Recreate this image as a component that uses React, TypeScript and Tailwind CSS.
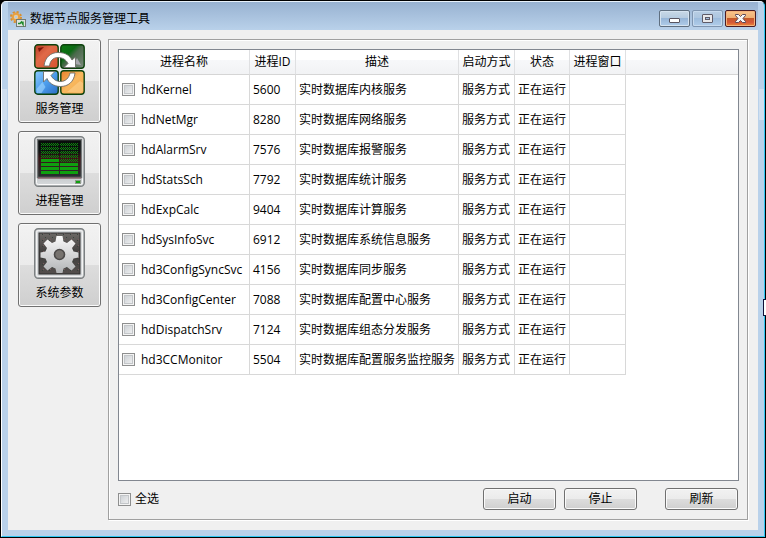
import React, { useState } from 'react';

const services = [
    { name: 'hdKernel', pid: 5600, desc: '实时数据库内核服务' },
    { name: 'hdNetMgr', pid: 8280, desc: '实时数据库网络服务' },
    { name: 'hdAlarmSrv', pid: 7576, desc: '实时数据库报警服务' },
    { name: 'hdStatsSch', pid: 7792, desc: '实时数据库统计服务' },
    { name: 'hdExpCalc', pid: 9404, desc: '实时数据库计算服务' },
    { name: 'hdSysInfoSvc', pid: 6912, desc: '实时数据库系统信息服务' },
    { name: 'hd3ConfigSyncSvc', pid: 4156, desc: '实时数据库同步服务' },
    { name: 'hd3ConfigCenter', pid: 7088, desc: '实时数据库配置中心服务' },
    { name: 'hdDispatchSrv', pid: 7124, desc: '实时数据库组态分发服务' },
    { name: 'hd3CCMonitor', pid: 5504, desc: '实时数据库配置服务监控服务' },
];

const headers = ['进程名称', '进程ID', '描述', '启动方式', '状态', '进程窗口'];

const checkboxClass =
    'appearance-none shrink-0 w-[13px] h-[13px] border border-[#8e8f8f] bg-linear-to-br from-[#c6cbd0] to-[#f6f6f6] shadow-[inset_0_0_0_1px_#f4f4f4,inset_0_0_0_2px_#c3c6c9] checked:from-[#3c6fa8] checked:to-[#6d9ed0]';

const buttonClass =
    'border border-[#707070] rounded-[3px] bg-[linear-gradient(#f2f2f2,#ebebeb_50%,#dddddd_50%,#cfcfcf)] shadow-[inset_0_0_0_1px_#fafafa]';

const AppIcon = () => (
    <svg className="w-4 h-4" viewBox="0 0 16 16" aria-hidden="true">
        <circle cx="6" cy="6" r="5" fill="none" stroke="#d98f2c" strokeWidth="2" strokeDasharray="2.1 1.83" />
        <circle cx="6" cy="6" r="3.3" fill="#f8d08a" stroke="#e5a044" strokeWidth="2.2" />
        <circle cx="6" cy="6" r="1.500" fill="#b7cbe2" />
        <rect x="6.500" y="8.500" width="9" height="7" fill="#dfe4e0" stroke="#727b76" />
        <path d="M8 12.500h2l1.500-1.500L13 13.500V10.500" fill="none" stroke="#1f8a2c" strokeWidth="1.400" />
    </svg>
);

const ServiceIcon = () => (
    <svg className="w-[51px] h-[51px]" viewBox="0 0 51 51" aria-hidden="true">
        <defs>
            <linearGradient id="red" x1="0" y1="0" x2="1" y2="1">
                <stop offset="0" stopColor="#b83a22" />
                <stop offset=".4" stopColor="#e06a48" />
                <stop offset="1" stopColor="#d8522f" />
            </linearGradient>
            <linearGradient id="green" x1="0" y1="0" x2="1" y2="1">
                <stop offset="0" stopColor="#0a7a10" />
                <stop offset=".35" stopColor="#0c6a14" />
                <stop offset=".5" stopColor="#4b6a4c" />
                <stop offset="1" stopColor="#7f8c80" />
            </linearGradient>
            <linearGradient id="blue" x1="0" y1="0" x2="1" y2="1">
                <stop offset="0" stopColor="#8ccbff" />
                <stop offset=".5" stopColor="#4d9eec" />
                <stop offset="1" stopColor="#2a6cc4" />
            </linearGradient>
            <linearGradient id="orange" x1="0" y1="0" x2="1" y2="1">
                <stop offset="0" stopColor="#e87f2c" />
                <stop offset=".5" stopColor="#f8b85e" />
                <stop offset="1" stopColor="#f4a648" />
            </linearGradient>
        </defs>
        <g stroke="#0d420d" strokeWidth="1.4">
            <rect x=".8" y=".8" width="23.4" height="23.4" rx="3" fill="url(#red)" />
            <rect x="26.8" y=".8" width="23.4" height="23.4" rx="3" fill="url(#green)" />
            <rect x=".8" y="26.8" width="23.4" height="23.4" rx="3" fill="url(#blue)" />
            <rect x="26.8" y="26.8" width="23.4" height="23.4" rx="3" fill="url(#orange)" />
        </g>
        <path d="M4 4l6-1-5 5z" fill="#7c1408" />
        <path d="M43 14l4 7-7-1z" fill="#b9b4c0" opacity=".8" />
        <path d="M2.5 45l6-7 3 5-4 6H3z" fill="#a4d8ff" opacity=".6" />
        <path d="M33 48l13-11 3 2v8l-2 2z" fill="#fbd08c" opacity=".6" />
        <g fill="#fff" stroke="#6d6d68" strokeWidth=".9" strokeLinejoin="round">
            <path d="M10 22C11 13 17 8.500 24 8.500c8 0 12 3.500 14 7.500l3.500-3v10.500H30l4-4C32 15.500 28.500 13.500 24 13.500c-5 0-8 3.500-8.500 8.500z" />
            <path d="M41 29c-1 9-7 13.500-14.500 13.500-7 0-12-4-13.500-8L9.500 38V27.500H21l-4 4c2 3.500 5 6 9.500 6 5 0 8.500-3.500 9.500-8.500z" />
        </g>
    </svg>
);

const ProcessIcon = () => (
    <svg className="w-[51px] h-[51px]" viewBox="0 0 51 51" aria-hidden="true">
        <defs>
            <linearGradient id="case" x1="0" y1="0" x2="0" y2="1">
                <stop offset="0" stopColor="#e4e6e8" />
                <stop offset=".8" stopColor="#c4c8cb" />
                <stop offset="1" stopColor="#d9dcde" />
            </linearGradient>
            <linearGradient id="screen" x1="0" y1="0" x2="0" y2="1">
                <stop offset="0" stopColor="#080c0a" />
                <stop offset=".3" stopColor="#0c1010" />
                <stop offset=".5" stopColor="#3a1416" />
                <stop offset="1" stopColor="#263030" />
            </linearGradient>
            <pattern id="dots" width="2" height="2" patternUnits="userSpaceOnUse">
                <path d="M0 0h1v1H0zM1 1h1v1H1z" fill="#0c860c" />
            </pattern>
        </defs>
        <rect x=".7" y=".7" width="49.600" height="49.600" rx="3.500" fill="url(#case)" stroke="#7c8082" strokeWidth="1.4" />
        <rect x="2.500" y="2.500" width="46" height="46" rx="2" fill="none" stroke="#fafafa" />
        <rect x="3.500" y="3.500" width="44" height="38" fill="url(#screen)" stroke="#737779" strokeWidth="1.500" />
        <path d="M4 42h43" stroke="#7d4a50" />
        <g fill="url(#dots)" shapeRendering="crispEdges">
            <path d="M7 7h18v3H7zM26 7h18v3H26zM7 11h18v3H7zM26 11h18v3H26zM7 15h18v3H7zM26 15h18v3H26zM7 19h18v3H7zM26 19h18v3H26zM26 23h18v3H26z" />
        </g>
        <path d="M7 23h18v3H7zM7 27h18v3H7zM26 27h18v3H26zM7 31h18v3H7zM26 31h18v3H26zM7 35h18v3H7zM26 35h18v3H26z" fill="#0fa00f" />
        <rect x="41" y="44" width="6" height="4" fill="#8e9a8a" />
        <rect x="42" y="45" width="4" height="2" fill="#0fa00f" />
    </svg>
);

const ParamIcon = () => (
    <svg className="w-[51px] h-[51px]" viewBox="0 0 51 51" aria-hidden="true">
        <defs>
            <linearGradient id="plate" x1="0" y1="0" x2="0" y2="1">
                <stop offset="0" stopColor="#6c6865" />
                <stop offset=".5" stopColor="#403e3d" />
                <stop offset="1" stopColor="#544f4d" />
            </linearGradient>
            <linearGradient id="gear" gradientUnits="userSpaceOnUse" x1="0" y1="8" x2="0" y2="44">
                <stop offset="0" stopColor="#fafafa" />
                <stop offset="1" stopColor="#b4b6b8" />
            </linearGradient>
            <pattern id="grain" width="7" height="6" patternUnits="userSpaceOnUse">
                <path d="M1 0h1v1H1zM4 3h1v1H4z" fill="#38423c" />
                <path d="M2 5h1v1H2z" fill="#765a5b" />
            </pattern>
        </defs>
        <rect x=".7" y=".7" width="49.600" height="49.600" rx="3.500" fill="#d4d7d9" stroke="#7c8082" strokeWidth="1.400" />
        <rect x="2.500" y="2.500" width="46" height="46" rx="2" fill="none" stroke="#f4f4f4" />
        <rect x="5" y="5" width="41" height="41" fill="url(#plate)" stroke="#2c2c2c" />
        <rect x="5.500" y="5.500" width="40" height="40" fill="url(#grain)" />
        <path
            d="M22.500 8h6l1 5.500 3.500 1.500 4.500-3.500 4 4-3.500 4.500 1.500 3.500 5 1v5l-5 1-1.500 3.500 3.500 4.500-4 4-4.500-3.500-3.500 1.500-1 4.500h-6l-1-4.500-3.500-1.500-4.500 3.500-4-4 3.500-4.500-1.500-3.500-5-1v-5l5-1 1.500-3.500-3.500-4.500 4-4 4.500 3.500 3.500-1.500z"
            fill="url(#gear)"
        />
        <circle cx="25.500" cy="26.500" r="5" fill="#77736f" stroke="#4c4a49" strokeWidth="1.600" />
    </svg>
);

const navItems = [
    { label: '服务管理', icon: ServiceIcon },
    { label: '进程管理', icon: ProcessIcon },
    { label: '系统参数', icon: ParamIcon },
];

const TitleBar = () => (
    <header className="flex items-start h-7 px-[2px] bg-linear-to-b from-[#98b2d1] to-[#b9d1ea]">
        <div className="flex flex-1 items-center gap-1 pt-[9px]">
            <AppIcon />
            <h1>数据节点服务管理工具</h1>
        </div>
        <div className="flex gap-[2px] pt-2">
            <button
                aria-label="最小化"
                className="flex items-end justify-center w-[31px] h-[17px] pb-[3px] rounded-[2px] border border-[#5f6f80] bg-[linear-gradient(#c9d9e6,#b6cbe0_45%,#94b3d5_45%,#b0cdea)] shadow-[inset_0_0_0_1px_#d5e3f0]"
            >
                <svg className="w-[11px] h-[5px]" viewBox="0 0 11 5" aria-hidden="true">
                    <rect x=".5" y=".5" width="10" height="4" rx=".5" fill="#fff" stroke="#595560" />
                </svg>
            </button>
            <button
                aria-label="最大化"
                className="flex items-center justify-center w-[31px] h-[17px] rounded-[2px] border border-[#7f95b0] bg-[linear-gradient(#b9cee3,#adc6e0_45%,#9bbadb_45%,#b0cdea)] shadow-[inset_0_0_0_1px_#c7daee]"
            >
                <svg className="w-[11px] h-[9px]" viewBox="0 0 11 9" aria-hidden="true">
                    <rect x=".5" y=".5" width="10" height="8" rx=".5" fill="#e8e8ea" stroke="#5f5b68" />
                    <rect x="3.500" y="3.500" width="4" height="2" fill="#a3bddc" stroke="#5f5b68" />
                </svg>
            </button>
            <button
                aria-label="关闭"
                className="flex items-center justify-center w-[31px] h-[17px] rounded-[2px] border border-[#4a1c24] bg-[linear-gradient(#f8c58c,#efb075_45%,#c25a25_45%,#d4573a_75%,#f08a35)] shadow-[inset_0_0_0_1px_#f3b27c]"
            >
                <svg className="w-[11px] h-[9px]" viewBox="0 0 11 9" aria-hidden="true">
                    <path
                        d="M.5.5h3l2 2 2-2h3v1L8 4.500l2.500 3v1h-3l-2-2-2 2h-3v-1l2.500-3L.5 1.500z"
                        fill="#f7f7f7"
                        stroke="#5d4a58"
                    />
                </svg>
            </button>
        </div>
    </header>
);

const App = () => {
    const [selected, setSelected] = useState<number[]>([]);
    const allSelected = selected.length === services.length;

    const toggle = (pid: number) =>
        setSelected(selected.includes(pid) ? selected.filter((p) => p !== pid) : [...selected, pid]);
    const toggleAll = () => setSelected(allSelected ? [] : services.map((s) => s.pid));

    return (
        <div className="relative min-h-screen flex bg-black p-px text-xs leading-4 text-black font-['Open_Sans','Noto_Sans_CJK_SC',sans-serif]">
            <div className="flex-1 flex flex-col rounded-t-[5px] border border-l-white border-t-[#e8f2fb] border-r-[#2fc6f2] border-b-[#2fc6f2] bg-[#b9d1ea] px-[6px] pb-[6px] overflow-hidden">
                <TitleBar />

                <div className="flex-1 flex gap-[7px] bg-[#f0f0f0] px-[10px] pt-[9px] pb-[10px]">
                    <nav className="flex flex-col gap-2">
                        {navItems.map((item) => {
                            const Icon = item.icon;
                            return (
                                <button
                                    key={item.label}
                                    className={`${buttonClass} flex flex-col items-center gap-[6px] w-[83px] h-[84px] pt-1`}
                                >
                                    <Icon />
                                    {item.label}
                                </button>
                            );
                        })}
                    </nav>

                    <main className="flex-1 flex flex-col gap-[7px] border border-[#a0a0a0] shadow-[inset_1px_1px_0_#fff,1px_1px_0_#fff] pl-[9px] pr-2 py-[9px]">
                        <div className="flex-1 bg-white border border-[#828790]">
                            <table className="w-full table-fixed border-separate border-spacing-0">
                                <colgroup>
                                    <col className="w-[131px]" />
                                    <col className="w-[46px]" />
                                    <col className="w-[163px]" />
                                    <col className="w-[56px]" />
                                    <col className="w-[55px]" />
                                    <col className="w-[56px]" />
                                    <col />
                                </colgroup>
                                <thead>
                                    <tr className="h-[25px] bg-[linear-gradient(#ffffff_40%,#f7f8fa_40%,#f1f2f4)]">
                                        {headers.map((h) => (
                                            <th key={h} className="p-0 font-normal border-r border-[#dfe0e2] border-b border-b-[#d5d5d5]">
                                                {h}
                                            </th>
                                        ))}
                                        <td className="p-0 border-b border-[#d5d5d5]" />
                                    </tr>
                                </thead>
                                <tbody>
                                    {services.map((s) => (
                                        <tr key={s.pid} className="h-[30px] whitespace-nowrap [&>td]:border-[#d8d8d8]">
                                            <td className="p-0 pl-[3px] border-r border-b">
                                                <label className="flex items-center gap-[6px]">
                                                    <input
                                                        type="checkbox"
                                                        className={checkboxClass}
                                                        checked={selected.includes(s.pid)}
                                                        onChange={() => toggle(s.pid)}
                                                    />
                                                    {s.name}
                                                </label>
                                            </td>
                                            <td className="p-0 pl-[3px] border-r border-b">{s.pid}</td>
                                            <td className="p-0 pl-[3px] border-r border-b">{s.desc}</td>
                                            <td className="p-0 pl-[3px] border-r border-b">服务方式</td>
                                            <td className="p-0 pl-[3px] border-r border-b">正在运行</td>
                                            <td className="p-0 border-r border-b" />
                                            <td className="p-0" />
                                        </tr>
                                    ))}
                                </tbody>
                            </table>
                        </div>

                        <div className="flex items-center gap-2 pr-px">
                            <label className="flex-1 flex items-center gap-1">
                                <input type="checkbox" className={checkboxClass} checked={allSelected} onChange={toggleAll} />
                                全选
                            </label>
                            <button className={`${buttonClass} w-[73px] h-[22px]`}>启动</button>
                            <button className={`${buttonClass} w-[73px] h-[22px] mr-5`}>停止</button>
                            <button className={`${buttonClass} w-[73px] h-[22px]`}>刷新</button>
                        </div>
                    </main>
                </div>
            </div>

            {/* Glass highlights on the window frame */}
            <div className="absolute left-[2px] top-[89px] w-[5px] h-[31px] bg-[#d0dfef]" />
            <div className="absolute right-[2px] top-[89px] w-[5px] h-[31px] bg-[#d0dfef]" />
            {/* Resize handle on the right edge */}
            <div className="absolute right-0 top-[299px] w-[3px] h-[17px] bg-white border-l border-y border-[#101038]" />
        </div>
    );
};

export default App;
